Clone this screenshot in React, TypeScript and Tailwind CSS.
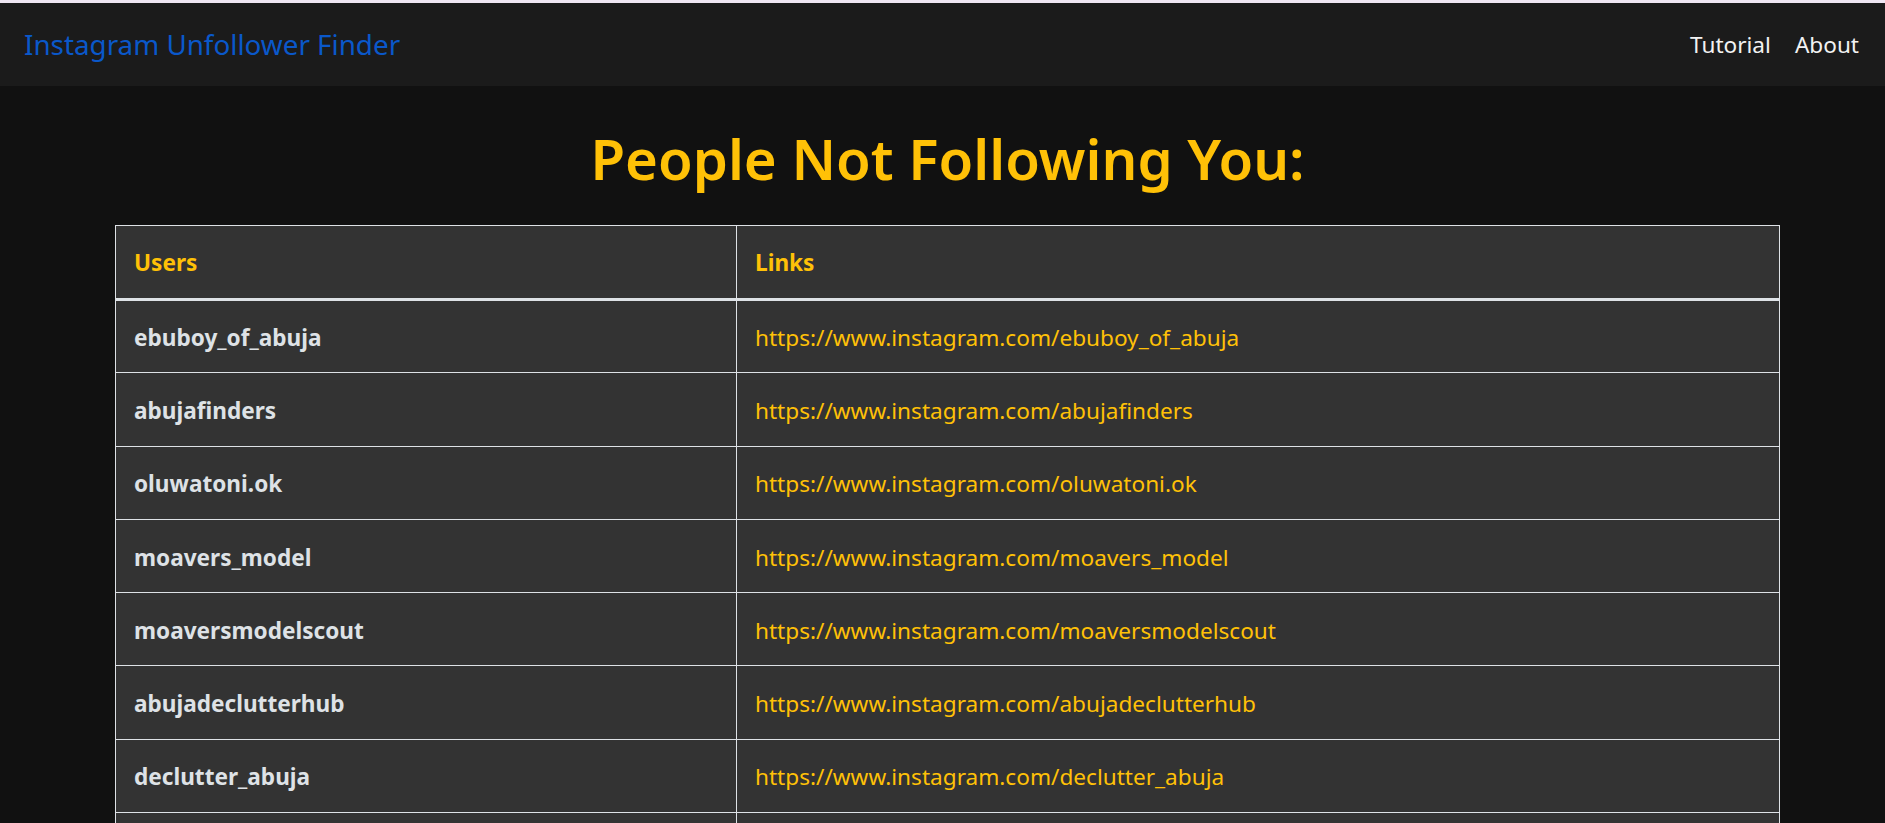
import React from 'react';

const users = [
  'ebuboy_of_abuja',
  'abujafinders',
  'oluwatoni.ok',
  'moavers_model',
  'moaversmodelscout',
  'abujadeclutterhub',
  'declutter_abuja',
  'abuja_thrift_store',
  'naija_fashion_hub',
];

export default function App() {
  return (
    <div
      className="min-h-screen bg-[#111111] text-[24px]"
      style={{ fontFamily: '"Noto Sans", "Open Sans", sans-serif' }}
    >
      <div className="h-[3px] bg-[#efe6f3]" />
      <nav className="h-[83px] bg-[#1b1b1b] flex items-center justify-between pl-[24px] pr-[14px]">
        <a href="#" className="text-[27.8px] text-[#0a58ca]">
          Instagram Unfollower Finder
        </a>
        <div className="flex text-[22.6px]">
          <a href="#" className="px-[12px] text-[#f2f2f2]">Tutorial</a>
          <a href="#" className="px-[12px] text-[#f2f2f2]">About</a>
        </div>
      </nav>

      <main>
        <h1 className="text-center text-[#ffc107] text-[56.3px] font-semibold leading-[72px] pt-[36px] pb-[31px] pl-[10px]">
          People Not Following You:
        </h1>

        <table className="ml-[115px] w-[1665px] table-fixed border-collapse bg-[#333333] border border-[#dee2e6] text-[22.6px]">
          <thead>
            <tr className="border-b-[3px] border-[#dee2e6]">
              <th className="w-[621px] text-left px-[18px] pt-[2px] h-[74px] text-[#ffc107] font-bold border-r border-[#dee2e6]">
                Users
              </th>
              <th className="text-left px-[18px] pt-[2px] h-[74px] text-[#ffc107] font-bold">Links</th>
            </tr>
          </thead>
          <tbody>
            {users.map((u) => (
              <tr key={u} className="border-b border-[#dee2e6]">
                <td className="px-[18px] pt-[3px] h-[73.3px] font-bold text-[#dee2e6] border-r border-[#dee2e6]">
                  {u}
                </td>
                <td className="px-[18px] pt-[3px] h-[73.3px]">
                  <a href="#" className="text-[#ffc107]">
                    https://www.instagram.com/{u}
                  </a>
                </td>
              </tr>
            ))}
          </tbody>
        </table>
      </main>
    </div>
  );
}
